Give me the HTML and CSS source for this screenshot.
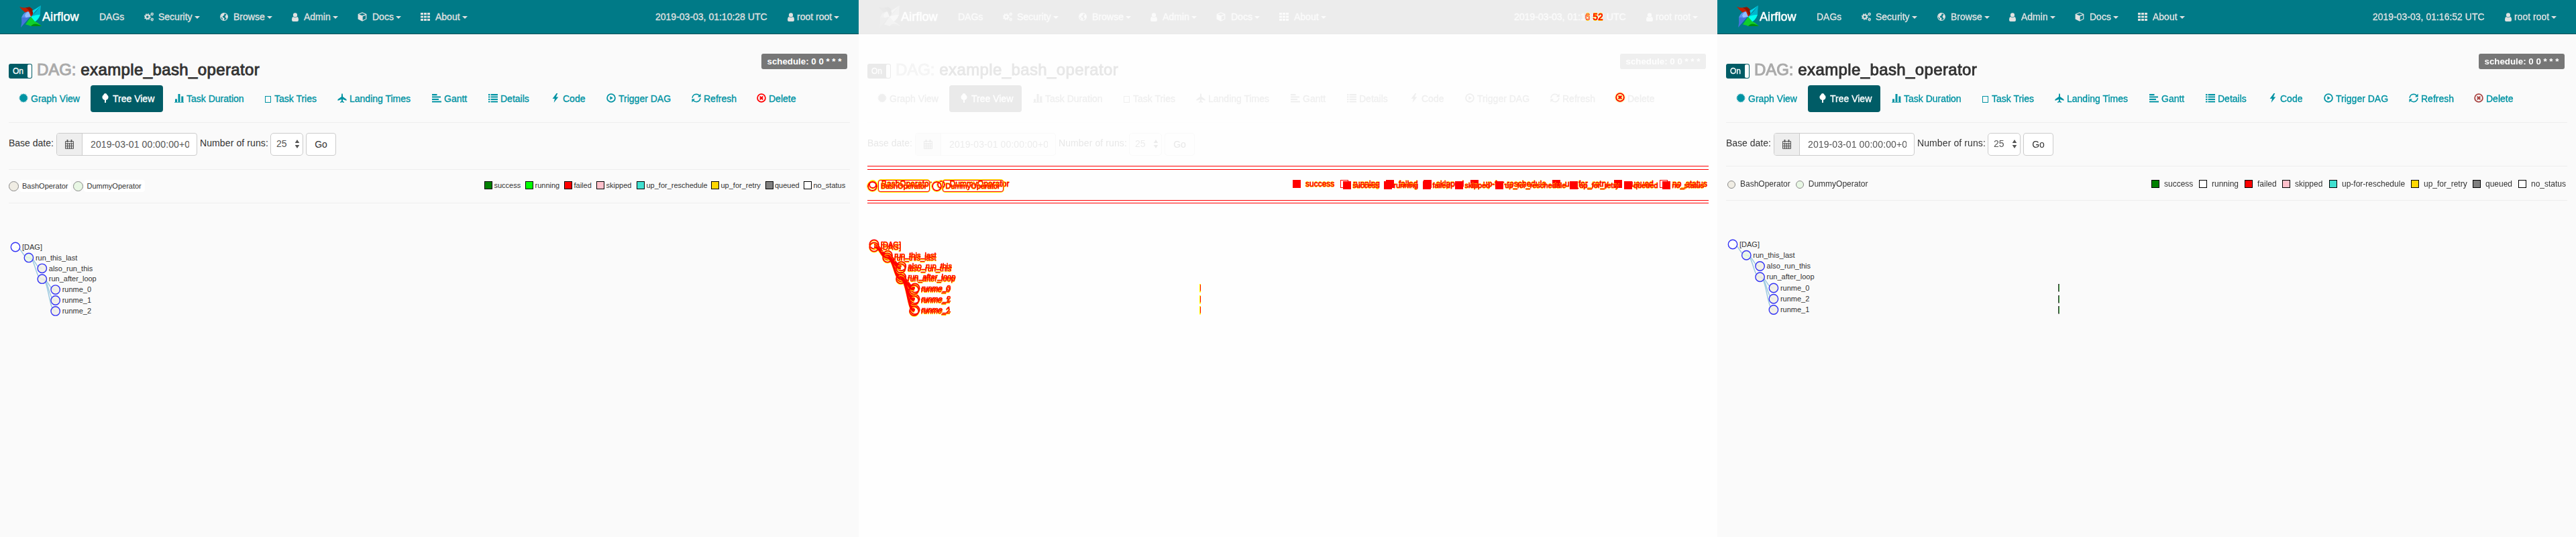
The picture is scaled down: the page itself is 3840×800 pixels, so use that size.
FILE: index.html
```html
<!DOCTYPE html>
<html lang="en">
<head>
<meta charset="utf-8">
<title>Airflow</title>
<link rel="stylesheet" href="styles.css">
</head>
<body>
<main class="compare" id="compare"></main>
<script src="app.js"></script>
</body>
</html>
```

FILE: styles.css
```css
* { box-sizing: border-box; }
body {
  margin: 0;
  background: #fff;
  color: #333;
  font: 14px/20px "Liberation Sans", Arial, sans-serif;
}
.compare { display: grid; grid-template-columns: repeat(3, 1280px); height: 800px; overflow: hidden; }
.panel { position: relative; background: #fafafa; height: 800px; overflow: hidden; }
.panel.diff { background: #fefefe; }
.panel.diff .base { filter: grayscale(1); opacity: .11; }
svg { display: block; flex: none; }

/* navbar */
.navbar {
  display: grid;
  grid-template-columns: 119px 67px 113px 107px 98px 94px 350px 197px 106px;
  height: 51px;
  padding-left: 29px;
  background: #007a87;
  border-bottom: 1px solid #004f58;
  color: #e1e1e1;
  line-height: 50px;
}
.navbar > * { display: flex; align-items: center; white-space: nowrap; -webkit-text-stroke: .3px currentColor; }
.navbar .brand { color: #fff; font-size: 18px; letter-spacing: .1px; -webkit-text-stroke: .5px #fff; }
.i-gears { margin-right: 7px; }
.i-globe { margin-right: 8px; }
.i-user { margin-right: 8px; }
.navbar .me .i-user { margin-right: 4px; }
.i-cube { margin-right: 8px; }
.i-th { margin-right: 8px; }
.caret { width: 0; height: 0; margin: 1px 0 0 3px; border: 4px solid transparent; border-top-color: currentColor; border-bottom: 0; }

/* heading */
.title { display: flex; height: 76px; padding: 29px 17px 0 13px; }
.toggle {
  display: flex; justify-content: space-between; width: 35px; height: 22px; margin: 15px 7px 0 0; padding: 1px;
  border-radius: 3px; background: #005c66; color: #fff; font-size: 12px; -webkit-text-stroke: .3px #fff;
}
.toggle span { padding-left: 5px; line-height: 20px; }
.toggle i { width: 6px; background: #fff; border-radius: 2px; }
.title h3 { margin: 11px 0 0; font-size: 24px; font-weight: 400; line-height: 26px; letter-spacing: .38px; -webkit-text-stroke: .9px currentColor; }
.title h3 em { color: #aaa; font-style: normal; letter-spacing: -.1px; -webkit-text-stroke: 1px #aaa; }
.schedule { margin-left: auto; width: 128px; height: 23px; border-radius: 3px; background: #777; color: #fff; font: bold 13.3px/23px "Liberation Sans", sans-serif; text-align: center; }

/* view tabs */
.pills { display: grid; grid-template-columns: 123px 109px 135px 108px 141px 84px 95px 81px 127px 97px 100px; padding-left: 12px; height: 40px; color: #0093a3; }
.pills a { display: flex; align-items: center; padding-left: 16px; gap: 4px; white-space: nowrap; -webkit-text-stroke: .35px currentColor; }
.pills a svg { margin-top: -2px; }
.pills .active { width: 108px; background: #005c66; color: #fff; border-radius: 4px; }
.pills .active svg { margin-left: -1px; }
.missing { width: 9px; height: 10px; margin: 2px 1px 0 0; border: 1px solid currentColor; }
.remove { color: #a94442; }
.panel.before .remove { color: #f00; }
.rule { height: 1px; margin: 0 13px; background: #eee; }
.rule.tabs { margin-top: 15px; }

/* date form */
.form { display: flex; align-items: flex-start; height: 49px; padding: 15px 13px 0; white-space: nowrap; }
.form label { line-height: 30px; height: 34px; }
.form label.date { width: 71px; }
.form label.runs { width: 109px; padding-left: 4px; letter-spacing: .1px; }
.group { display: flex; width: 210px; height: 34px; border: 1px solid #ccc; border-radius: 4px; background: #fff; overflow: hidden; }
.addon { display: flex; align-items: center; justify-content: center; width: 38px; background: #eee; border-right: 1px solid #ccc; color: #555; }
.value { width: 159px; padding-left: 12px; overflow: hidden; color: #555; line-height: 32px; letter-spacing: .1px; }
.value b { display: block; width: 147px; overflow: hidden; font-weight: 400; }
.select { display: flex; align-items: center; justify-content: space-between; width: 49px; height: 34px; padding: 0 4px 2px 8px; border: 1px solid #ccc; border-radius: 5px; background: #fff; color: #555; }
.go { width: 45px; height: 34px; margin-left: 4px; border: 1px solid #ccc; border-radius: 4px; background: #fff; text-align: center; line-height: 33px; }

/* legend and tree */
.lower { width: 1280px; }
.lower.v1 { padding-top: 20px; margin-top: 0; }
.lower.v2 { padding-top: 15px; }
.legend { display: flex; justify-content: space-between; }
.v1 .legend { height: 49px; padding: 15px 18px 0 13px; font-size: 11px; }
.v2 .legend { height: 50px; padding: 20px 14px 0 15px; font-size: 12px; }
.ops { display: flex; }
.ops i { border: 1px solid #888; border-radius: 50%; background: #f0ede4; }
.ops i.dummy { background: #e8f7e4; }
.v1 .ops i { width: 15px; height: 15px; margin-top: 2px; }
.v1 .ops span { height: 18px; margin: 0 3px 0 1px; padding: 0 5px 0 4px; line-height: 18px; background: #fff; border-radius: 4px; }
.v2 .ops i { width: 12px; height: 12px; margin-top: 1px; }
.v2 .ops span { margin: 0 8px 0 7px; line-height: 12px; }
.states { display: grid; }
.v1 .states { grid-template-columns: 61px 58px 48px 60px 111px 80.5px 57.5px 64px; margin-top: 2px; }
.v2 .states { grid-template-columns: 71px 68px 56px 70px 122px 92px 68px 72px; }
.states div { display: flex; height: 13px; line-height: 12px; white-space: nowrap; }
.states i { width: 12px; height: 12px; border: 1px solid #000; background: #fff; }
.v1 .states i { margin-right: 2.5px; }
.v2 .states i { margin-right: 7px; }
.states .success { background: #008000; }
.states .running { background: #0f0; }
.v2 .states .running { background: #fff; }
.states .failed { background: #f00; }
.states .skipped { background: #ffc0cb; }
.states .reschedule { background: #40e0d0; }
.states .retry { background: #ffd700; }
.states .queued { background: #808080; }
.tree text { font-size: 11px; fill: #333; }
.tree path { fill: none; stroke: #9ecae1; stroke-width: 1.5; }
.tree circle { fill: #f0ede4; fill-opacity: .85; stroke: #3333f5; stroke-width: 1.4; }
.tree .root { fill: #fff; }
.tree .dummy { fill: #e8f7e4; }
.tree .run { fill: #444; }
.tree .ok { fill: #2c962c; }

/* changed pixels */
.stack { display: grid; }
.stack .lower { grid-area: 1 / 1; }
.diff .lower, .diff .stamp { color: #f00; -webkit-text-stroke: .6px #f00; text-shadow: 0 1px #ff0, 0 -1px #ff0; }
.diff .lower .rule { background: #f00; }
.diff .ops i, .diff .ops i.dummy { background: transparent; border: 2px solid #f00; outline: 1px solid #ff0; }
.diff .ops span { background: transparent; }
.diff .v1 .ops span { box-shadow: inset 0 0 0 1px #f00, 0 0 0 1px #ff0; }
.diff .states i { background: #f00; border-color: #f00; }
.diff .v2 .states i:not([class]) { background: #fff; }
.diff .tree text { fill: #f00; stroke: #f00; stroke-width: .6px; text-shadow: none; }
.diff .tree { filter: drop-shadow(0 1px 0 #ff0); }
.diff .tree path { stroke: #f00; stroke-width: 3; }
.diff .tree circle { fill: none; stroke: #f00; stroke-width: 1.8; }
.diff .tree .run { fill: #ff0; }
.diff .tree .ok { fill: #f00; }
.stamp { position: absolute; left: 976px; top: 0; line-height: 50px; white-space: pre; }
.stamp s { visibility: hidden; text-decoration: none; }
.stamp b { font-weight: 400; color: #fff; }
.cross { position: absolute; left: 1128px; top: 138px; color: #f00; filter: drop-shadow(0 0 1px #ff0); }
```

FILE: app.js
```js
const icons = {
  gears: [14, 14, '<g fill="none" stroke="currentColor"><circle cx="4.8" cy="7" r="2.8" stroke-width="2"/><circle cx="4.8" cy="7" r="4.3" stroke-width="1.3" stroke-dasharray="1.7 1.68"/><circle cx="11.8" cy="3" r="1.4" stroke-width="1.2"/><circle cx="11.8" cy="3" r="2.2" stroke-width=".8" stroke-dasharray=".9 .83"/><circle cx="11.8" cy="11" r="1.4" stroke-width="1.2"/><circle cx="11.8" cy="11" r="2.2" stroke-width=".8" stroke-dasharray=".9 .83"/></g>'],
  globe: [12, 12, '<circle cx="6" cy="6" r="5.4" fill="none" stroke="currentColor" stroke-width="1.1"/><path fill="currentColor" d="M2 2L5 .6 7 1 5.8 2.3 7 3 5 4.6 3.8 5.5 4 7 5.6 7.3 6.6 8.5 5.4 11.4 4 11 3.7 8.6 1 6zM8 4.8L9 3 10.8 3.3 11.4 6 10 8.8 8.8 8.6 8.5 7 7.4 6.2z"/>'],
  user: [10, 13, '<circle cx="5" cy="3.4" r="3.1" fill="currentColor"/><path fill="currentColor" d="M2 6Q5 8.4 8 6 10 6.8 10 10.7 10 13 8 13H2Q0 13 0 10.7 0 6.8 2 6z"/>'],
  cube: [14, 14, '<path fill="currentColor" fill-rule="evenodd" d="M7 .3L13.4 2.9V10.6L7 13.8.6 10.6V2.9zM7 1.6L2.3 3.5 7 5.3 11.7 3.5zM7.7 6.6V12.1L12.2 9.9V4.8z"/>'],
  th: [14, 12, '<path fill="currentColor" d="M0 0h4v3H0zM5 0h4v3H5zM10 0h4v3h-4zM0 4.5h4v3H0zM5 4.5h4v3H5zM10 4.5h4v3h-4zM0 9h4v3H0zM5 9h4v3H5zM10 9h4v3h-4z"/>'],
  graph: [14, 14, '<path fill="currentColor" d="M7 0l1 1.8L9.7.6l.1 2 2-.6-.7 2 2.1.1-1.2 1.7L14 7l-2 1.2 1.2 1.7-2.1.1.7 2-2-.6-.1 2L8 12.2 7 14l-1-1.8-1.7 1.2-.1-2-2 .6.7-2-2.1-.1L2 8.2 0 7l2-1.2L.8 4.1l2.1-.1-.7-2 2 .6.1-2L6 1.8z"/>'],
  tree: [14, 14, '<path fill="currentColor" d="M7 0Q9.4.3 9.7 2.5 11.6 3.6 11.6 5.8 11.4 9.4 8 10v4H6v-4Q2.6 9.4 2.4 5.8 2.4 3.6 4.3 2.5 4.6.3 7 0z"/>'],
  bars: [14, 14, '<path fill="currentColor" d="M1 8.5h3V13H1zM5.5 1h3v12h-3zM10.3 4.5h3V13h-3zM0 13h14v.8H0z"/>'],
  plane: [14, 14, '<path fill="currentColor" d="M7 0Q8 .7 8 2.5V5L13.5 9v2L8 9v2.4l2 1.6v1L7 13.2 4 14v-1l2-1.6V9L.5 11V9L6 5V2.5Q6 .7 7 0z"/>'],
  gantt: [14, 14, '<path fill="currentColor" d="M0 1h7.5v2.2H0zM0 4.4h13v2.2H0zM0 7.9h10v2.2H0zM0 11.4h14v2.2H0z"/>'],
  list: [14, 14, '<path fill="currentColor" d="M0 1h2.4v2.2H0zM3.6 1H14v2.2H3.6zM0 4.4h2.4v2.2H0zM3.6 4.4H14v2.2H3.6zM0 7.9h2.4v2.2H0zM3.6 7.9H14v2.2H3.6zM0 11.4h2.4v2.2H0zM3.6 11.4H14v2.2H3.6z"/>'],
  flash: [12, 14, '<path fill="currentColor" d="M6.5 0L.6 8H4L2.6 14 9.3 5.6H5.8L8.3 0z"/>'],
  play: [14, 14, '<circle cx="7" cy="7" r="5.9" fill="none" stroke="currentColor" stroke-width="1.8"/><path fill="currentColor" d="M5.4 4.2L9.9 7 5.4 9.8z"/>'],
  refresh: [14, 14, '<path fill="none" stroke="currentColor" stroke-width="1.5" d="M1 6.8Q1.8 1.5 7 1.2 9.6 1.2 11.6 3.4M13 7.2Q12.2 12.5 7 12.8 4.4 12.8 2.4 10.6"/><path fill="currentColor" d="M13.6.6V5.4H9zM.4 13.4V8.6H5z"/>'],
  remove: [14, 14, '<circle cx="7" cy="7" r="5.9" fill="none" stroke="currentColor" stroke-width="1.8"/><path stroke="currentColor" stroke-width="2.1" d="M4.7 4.7l4.6 4.6M9.3 4.7L4.7 9.3"/>'],
  calendar: [13, 14, '<path fill="none" stroke="currentColor" d="M.5 2.5h12v11H.5zM.5 5.5h12M.5 8.2h12M.5 10.8h12M3.5 5v8.5M6.5 5v8.5M9.5 5v8.5"/><path fill="none" stroke="currentColor" stroke-width="1.8" d="M3.5 0v4M9.5 0v4"/>'],
  sort: [8, 13, '<path fill="currentColor" d="M4 0L7.3 5H.7zM4 13L7.3 8H.7z"/>'],
  logo: [34, 34, '<path fill="#c21f00" d="M0 2Q5 4 9 3.5L15 2.5Q21 6 21 11L17.5 17 9 11Q5 8 0 2z"/><path fill="#8c1500" d="M9 3.5L15 2.5Q21 6 21 11L18 15Q17 8 9 3.5z"/><path fill="#00d7ee" d="M32 0L20 13Q21 10 19 8 25 5 32 0z"/><path fill="#00b4cc" d="M17 17L25 9 32 0Q31 7 31 14 25 18 17 17z"/><path fill="#00fff0" d="M17 17Q23 14 31 14 28 22 22 25z"/><path fill="#5b91ef" d="M3 18Q6 10 13 9L17 17 9 19z"/><path fill="#91bdff" d="M8 15Q11 9 14 9.5L17 17 10 19z"/><path fill="#4573dc" d="M3 18L9 18.5 16 17 2 33Q4 26 3 18z"/><path fill="#10cf2c" d="M17 17L9 28.5Q14 29 17 31L33 31Q27 25 23 24z"/><path fill="#008f0c" d="M17 31Q22 24 33 31z"/>']
};

const icon = (name, extra = '') => {
  const [w, h, body] = icons[name];
  return `<svg class="i-${name} ${extra}" width="${w}" height="${h}" viewBox="0 0 ${w} ${h}">${body}</svg>`;
};
const caret = '<span class="caret"></span>';

function base(time) {
  const menus = [['gears', 'Security'], ['globe', 'Browse'], ['user', 'Admin'], ['cube', 'Docs'], ['th', 'About']];
  const tabs = [['graph', 'Graph View'], ['tree', 'Tree View'], ['bars', 'Task Duration'], ['', 'Task Tries'],
    ['plane', 'Landing Times'], ['gantt', 'Gantt'], ['list', 'Details'], ['flash', 'Code'],
    ['play', 'Trigger DAG'], ['refresh', 'Refresh'], ['remove', 'Delete']];
  return `<div class="base">
    <nav class="navbar"><a class="brand">${icon('logo')}Airflow</a><a>DAGs</a>
      ${menus.map(([i, t]) => `<a>${icon(i)}${t}${caret}</a>`).join('')}
      <a>${time}</a><a class="me">${icon('user')}root root${caret}</a></nav>
    <header class="title"><div class="toggle"><span>On</span><i></i></div>
      <h3><em>DAG:</em> example_bash_operator</h3><div class="schedule">schedule: 0 0 * * *</div></header>
    <nav class="pills">${tabs.map(([i, t]) => `<a class="${i === 'tree' ? 'active' : ''}">${i ? icon(i, i === 'remove' ? 'remove' : '') : '<i class="missing"></i>'}${t}</a>`).join('')}</nav>
    <div class="rule tabs"></div>
    <form class="form"><label class="date">Base date:</label>
      <div class="group"><span class="addon">${icon('calendar')}</span><span class="value"><b>2019-03-01 00:00:00+0</b></span></div>
      <label class="runs">Number of runs:</label><div class="select">25${icon('sort')}</div><div class="go">Go</div></form>
  </div>`;
}

function lower(v, withRuns) {
  const states = [['success', 'success'], ['running', 'running'], ['failed', 'failed'], ['skipped', 'skipped'],
    ['reschedule', v === 1 ? 'up_for_reschedule' : 'up-for-reschedule'], ['retry', 'up_for_retry'], ['queued', 'queued'], ['', 'no_status']];
  const names = ['[DAG]', 'run_this_last', 'also_run_this', 'run_after_loop', 'runme_0', ...(v === 1 ? ['runme_1', 'runme_2'] : ['runme_2', 'runme_1'])];
  const level = [0, 1, 2, 2, 3, 3, 3];
  const parent = [-1, 0, 1, 1, 3, 3, 3];
  const top = v === 1 ? 303 : 299;
  const first = (v === 1 ? 368 : 364) - top;
  const step = v === 1 ? 15.9 : 16.25;
  const x = n => 23 + level[n] * (v === 1 ? 19.9 : 20.3);
  const y = n => first + n * step;
  const links = names.map((_, n) => n ? `<path d="M${x(parent[n])} ${y(parent[n])}C${x(parent[n]) + 10} ${y(parent[n])} ${x(n) - 10} ${y(n)} ${x(n)} ${y(n)}"/>` : '').join('');
  const nodes = names.map((t, n) => `<circle class="${['root', 'dummy'][n] || ''}" cx="${x(n)}" cy="${y(n)}" r="6.7"/><text x="${x(n) + 10}" y="${y(n) + 3.7}">${t}</text>`).join('');
  const runs = withRuns ? [423, 440, 456].map(t => `<rect class="run" x="508" y="${t - top}" width="2" height="11.5"/><rect class="ok" x="509" y="${t - top + 1}" width="1" height="9.5"/>`).join('') : '';
  return `<section class="lower v${v}"><div class="rule"></div>
    <div class="legend"><div class="ops"><i></i><span>BashOperator</span><i class="dummy"></i><span>DummyOperator</span></div>
    <div class="states">${states.map(([c, t]) => `<div><i${c ? ` class="${c}"` : ''}></i>${t}</div>`).join('')}</div></div>
    <div class="rule"></div><svg class="tree" width="1280" height="200">${links}${nodes}${runs}</svg></section>`;
}

document.getElementById('compare').innerHTML =
  `<section class="panel before">${base('2019-03-03, 01:10:28 UTC')}${lower(1, false)}</section>
  <section class="panel diff">${base('2019-03-03, 01:16:52 UTC')}<div class="stack">${lower(2, true)}${lower(1, false)}</div>
    <div class="stamp"><s>2019-03-03, 01:1</s><b>6</b><s>:</s>52</div><div class="cross">${icon('remove')}</div></section>
  <section class="panel after">${base('2019-03-03, 01:16:52 UTC')}${lower(2, true)}</section>`;
```
